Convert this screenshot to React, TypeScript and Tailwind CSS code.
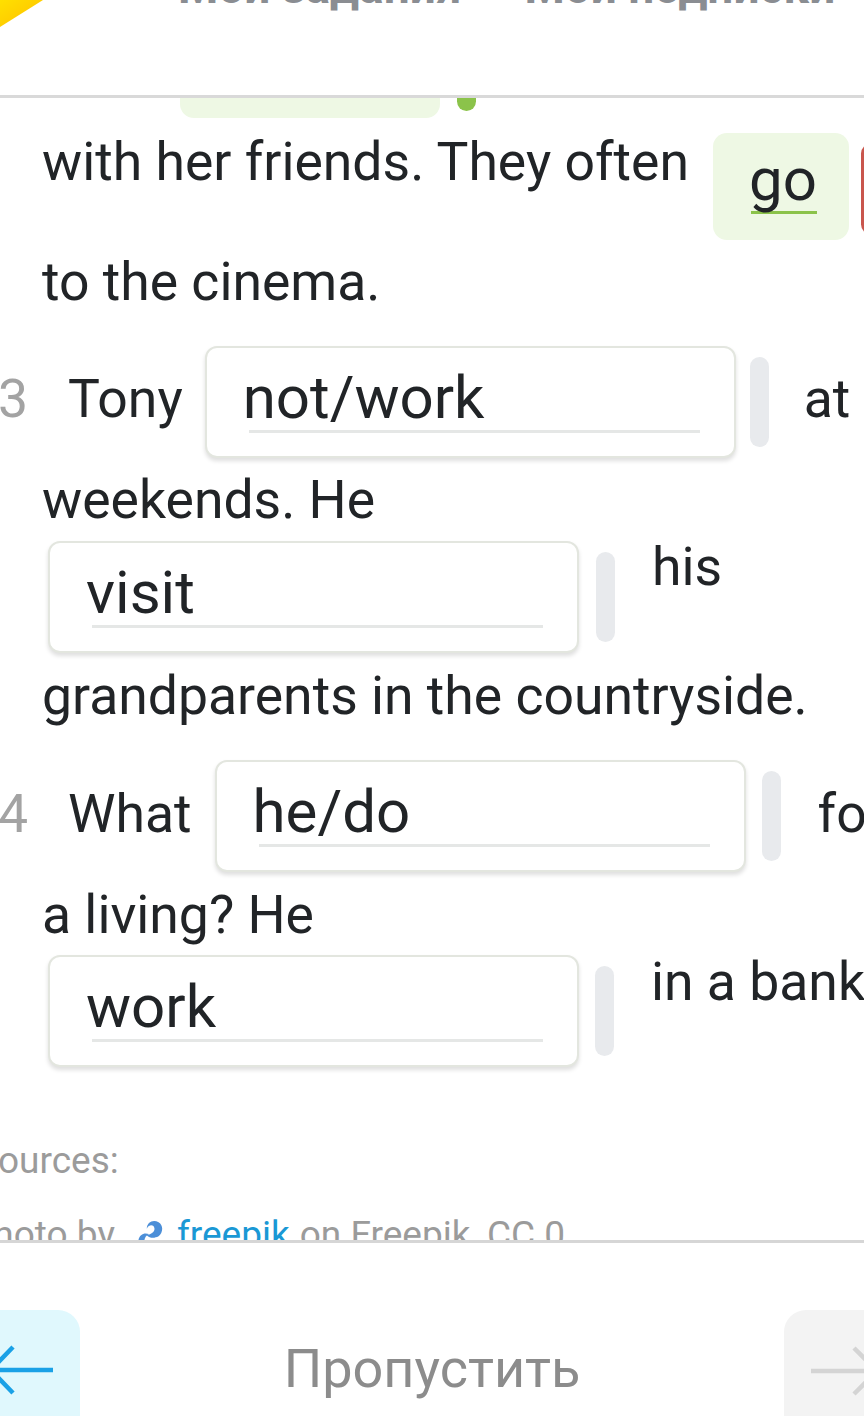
import React from "react"

function Pill({ color = "bg-[#e8eaed]", className = "" }: { color?: string; className?: string }) {
  return <div className={`w-[19px] h-[90px] rounded-full shrink-0 ${color} ${className}`} />
}

function AnswerBox({ value, className = "" }: { value: string; className?: string }) {
  return (
    <div
      className={`w-[531px] h-[112px] shrink-0 rounded-[12px] border-2 border-[#e3e6df] bg-white shadow-[0_3px_4px_rgba(0,0,0,0.13)] ${className}`}
    >
      <div className="ml-[36px] mr-[34px] mt-[18px]">
        <div className="text-[60px] leading-[64px] text-[#212427]">{value}</div>
        <div className="ml-[6px] h-[3px] bg-[#e5e7e6]" />
      </div>
    </div>
  )
}

function Words({ children, className = "" }: { children: React.ReactNode; className?: string }) {
  return <span className={`text-[53.5px] leading-[64px] text-[#212427] whitespace-nowrap shrink-0 ${className}`}>{children}</span>
}

function Num({ n, className = "" }: { n: string; className?: string }) {
  return <span className={`-ml-[44px] w-[70px] shrink-0 text-[53.5px] leading-[64px] text-[#a3a3a3] ${className}`}>{n}</span>
}

export default function App() {
  return (
    <div className="w-[864px] h-[1416px] overflow-hidden bg-white flex flex-col font-[Roboto,sans-serif]">
      {/* header */}
      <div className="h-[98px] shrink-0 border-b-[3px] border-[#d9d9d9] flex items-start overflow-hidden">
        <svg width="44" height="28" viewBox="0 0 44 28" className="shrink-0">
          <defs>
            <linearGradient id="yl" x1="0" y1="0" x2="1" y2="1">
              <stop offset="0" stopColor="#ffe000" />
              <stop offset="0.7" stopColor="#ffc800" />
              <stop offset="1" stopColor="#ff9f00" />
            </linearGradient>
          </defs>
          <polygon points="0,0 43,0 0,27" fill="url(#yl)" />
        </svg>
        <div className="-mt-[38px] flex font-bold text-[46px] leading-[50px] text-[#8a8d92] whitespace-nowrap">
          <span className="ml-[134px]">Мои задания</span>
          <span className="ml-[63px]">Мои подписки</span>
        </div>
      </div>

      {/* content */}
      <div className="flex-1 overflow-hidden pl-[42px] flex flex-col">
        <div className="flex items-start -mt-[87px]">
          <div className="ml-[138px] w-[260px] h-[107px] rounded-[14px] bg-[#eef8e4] shrink-0" />
          <Pill color="bg-[#8bc34a]" className="ml-[17px] mt-[10px] h-[87px]" />
        </div>

        <div className="flex items-start mt-[12px]">
          <Words>with her friends. They often</Words>
          <div className="ml-[24px] mt-[3px] w-[136px] h-[107px] shrink-0 rounded-[14px] bg-[#eef8e4] pl-[36px]">
            <div className="mt-[16px] inline-block">
              <div className="text-[60px] leading-[62px] text-[#212427]">go</div>
              <div className="ml-[2px] h-[3px] bg-[#8bc34a]" />
            </div>
          </div>
          <Pill color="bg-[#c9564d]" className="ml-[12px] mt-[14px] h-[88px]" />
        </div>

        <div className="flex mt-[10px]">
          <Words>to the cinema.</Words>
        </div>

        <div className="flex items-start mt-[32px]">
          <Num n="3" className="mt-[21px]" />
          <Words className="mt-[21px]">Tony</Words>
          <AnswerBox value="not/work" className="ml-[22px]" />
          <Pill className="ml-[14px] mt-[11px]" />
          <Words className="ml-[35px] mt-[21px]">at weekends.</Words>
        </div>

        <div className="flex mt-[10px]">
          <Words>weekends. He</Words>
        </div>

        <div className="flex items-start mt-[3px]">
          <AnswerBox value="visit" className="ml-[6px] mt-[6px]" />
          <Pill className="ml-[17px] mt-[17px]" />
          <Words className="ml-[37px]">his</Words>
        </div>

        <div className="flex mt-[11px]">
          <Words>grandparents in the countryside.</Words>
        </div>

        <div className="flex items-start mt-[32px]">
          <Num n="4" className="mt-[22px]" />
          <Words className="mt-[22px]">What</Words>
          <AnswerBox value="he/do" className="ml-[23px]" />
          <Pill className="ml-[16px] mt-[11px]" />
          <Words className="ml-[37px] mt-[22px]">for</Words>
        </div>

        <div className="flex mt-[11px]">
          <Words>a living? He</Words>
        </div>

        <div className="flex items-start mt-[3px]">
          <AnswerBox value="work" className="ml-[6px] mt-[5px]" />
          <Pill className="ml-[16px] mt-[16px]" />
          <Words className="ml-[37px]">in a bank.</Words>
        </div>

        <div className="flex mt-[72px] -ml-[66px] text-[37px] leading-[44px] text-[#9b9b9b] whitespace-nowrap">
          Sources:
        </div>

        <div className="flex items-start mt-[30px] -ml-[72px] text-[37px] leading-[44px] text-[#9b9b9b] whitespace-nowrap">
          <span>Photo by</span>
          <svg width="30" height="30" viewBox="0 0 28 28" className="ml-[20px] mt-[5px] shrink-0">
            <path
              d="M3 23 C3 16 8 13 13 15 C9 17 8 21 9 25 C6 26 3 26 3 23 Z M11 10 C11 4 17 1 22 4 C27 7 26 14 22 17 C18 19 14 19 11 16 C16 15 19 12 18 9 C17 6 13 6 11 10 Z"
              fill="#4c8fd8"
            />
          </svg>
          <span className="ml-[12px] text-[#1a98d5]">freepik</span>
          <span className="ml-[10px]">on Freepik, CC 0</span>
        </div>
      </div>

      {/* footer */}
      <div className="h-[176px] shrink-0 border-t-[3px] border-[#d6d6d6] flex items-start justify-between pt-[67px] overflow-hidden">
        <div className="-ml-[40px] w-[120px] h-[130px] shrink-0 rounded-[22px] bg-[#e0f8fd]">
          <svg width="120" height="120" viewBox="0 0 120 120">
            <path d="M31 60 H93 M53 37 L31 60 L53 83" stroke="#1aa1e6" strokeWidth="4.5" fill="none" />
          </svg>
        </div>
        <div className="mt-[27px] text-[54px] leading-[64px] text-[#8c8c8c] whitespace-nowrap">Пропустить</div>
        <div className="-mr-[40px] w-[120px] h-[130px] shrink-0 rounded-[22px] bg-[#f3f3f3]">
          <svg width="120" height="120" viewBox="0 0 120 120">
            <path d="M27 61 H93 M70 38 L93 61 L70 84" stroke="#d4d4d4" strokeWidth="4.5" fill="none" />
          </svg>
        </div>
      </div>
    </div>
  )
}
